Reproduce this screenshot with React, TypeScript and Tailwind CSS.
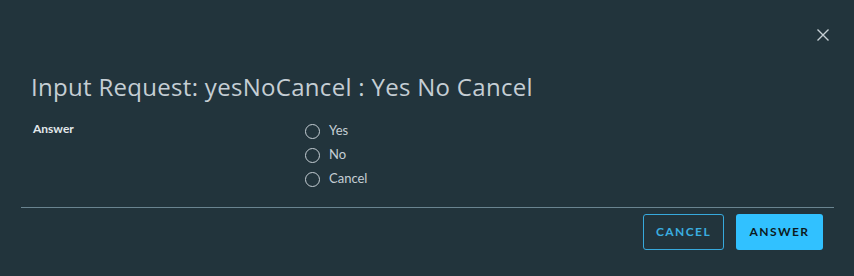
import React from 'react'

const options = ['Yes', 'No', 'Cancel']

export default function App() {
  return (
    <div
      className="w-[854px] h-[276px] bg-[#22343c] text-[#c5ced4] relative overflow-hidden"
      style={{ fontFamily: '"Lato", "Open Sans", sans-serif' }}
    >
      {/* Close */}
      <button className="absolute left-[816px] top-[28px] w-[14px] h-[14px] flex items-center justify-center">
        <svg width="14" height="14" viewBox="0 0 14 14" fill="none">
          <path d="M1.5 1.5 L12.5 12.5 M12.5 1.5 L1.5 12.5" stroke="#c5ced4" strokeWidth="1.4" />
        </svg>
      </button>

      <div className="pt-[71px] px-[21px]">
        <h1
          className="pl-[10px] text-[24px] leading-[32px] font-normal text-[#c5ced4] tracking-[0.3px]"
          style={{ fontFamily: '"Open Sans", sans-serif' }}
        >
          Input Request: yesNoCancel : Yes No Cancel
        </h1>

        <div className="flex mt-[18px] pl-[12px]">
          <div className="w-[272px] text-[12px] font-bold text-[#e3e8eb] leading-[16px]">Answer</div>
          <div className="flex flex-col gap-[8px] pt-[2px]">
            {options.map(o => (
              <label key={o} className="flex items-center gap-[9px] h-[16px] text-[13px] text-[#c5ced4]">
                <span className="w-[15px] h-[15px] rounded-full border border-[#c5ced4]" />
                {o}
              </label>
            ))}
          </div>
        </div>

        <div className="mt-[20px] border-t border-[#6a8490] mr-[-1px]" />

        <div className="flex justify-end gap-[12px] mt-[6px] pr-[10px]">
          <button className="h-[36px] w-[81px] rounded-[3px] border border-[#37a9dc] text-[#3aaee0] text-[12px] font-bold tracking-[0.12em]">
            CANCEL
          </button>
          <button className="h-[36px] w-[87px] rounded-[3px] bg-[#31c1ff] text-[#0d1a21] text-[12px] font-bold tracking-[0.12em]">
            ANSWER
          </button>
        </div>
      </div>
    </div>
  )
}
